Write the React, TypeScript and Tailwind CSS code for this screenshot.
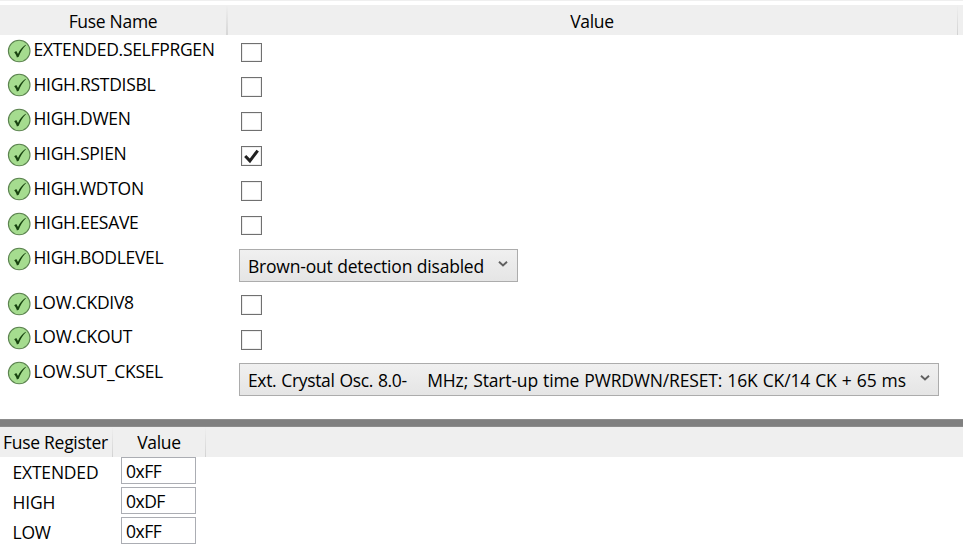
import React from "react";

type Fuse = { name: string; pad: string; textPad: string; height: string; short?: boolean; checked?: boolean; option?: string };

const fuses: Fuse[] = [
  { name: "EXTENDED.SELFPRGEN", pad: "pt-2", textPad: "pt-[2px]", height: "h-[34px]", short: true },
  { name: "HIGH.RSTDISBL", pad: "pt-2", textPad: "pt-[3px]", height: "h-[35px]" },
  { name: "HIGH.DWEN", pad: "pt-2", textPad: "pt-[2px]", height: "h-[35px]", short: true },
  { name: "HIGH.SPIEN", pad: "pt-[7px]", textPad: "pt-[2px]", height: "h-[34px]", checked: true },
  { name: "HIGH.WDTON", pad: "pt-2", textPad: "pt-[3px]", height: "h-[35px]" },
  { name: "HIGH.EESAVE", pad: "pt-2", textPad: "pt-[2px]", height: "h-[35px]", short: true },
  { name: "HIGH.BODLEVEL", pad: "pt-2", textPad: "pt-[2px]", height: "h-[45px]", option: "brownout" },
  { name: "LOW.CKDIV8", pad: "pt-[7px]", textPad: "pt-[2px]", height: "h-[34px]" },
  { name: "LOW.CKOUT", pad: "pt-2", textPad: "pt-[2px]", height: "h-[35px]" },
  { name: "LOW.SUT_CKSEL", pad: "pt-2", textPad: "pt-[2px]", height: "h-[62px]", option: "clock" },
];

const registers = [
  { name: "EXTENDED", value: "0xFF" },
  { name: "HIGH", value: "0xDF" },
  { name: "LOW", value: "0xFF" },
];

function StatusIcon() {
  return (
    <svg className="mt-[4px] h-[24px] w-[24px] shrink-0" viewBox="0 0 24 24">
      <circle cx="12.2" cy="12" r="10.8" fill="#a5dc8f" stroke="#5c8350" strokeWidth="1.1" />
      <path d="M7.2 13.2 9.3 12 11 15.1C12.6 11.3 14.9 8.2 18.6 5.8L18.9 6.2C15.6 9.2 13.4 13.2 11.7 17.8L9.9 18.5C9.5 16.5 8.5 14.6 7.2 13.2Z" fill="#184310" />
    </svg>
  );
}

function Check({ checked, short }: { checked?: boolean; short?: boolean }) {
  return (
    <span className={`block w-[21px] border border-[#707070] bg-white shadow-[inset_0_0_0_1px_#eeeeee] ${short ? "h-[19px]" : "h-5"}`}>
      {checked && (
        <svg className="h-[18px] w-[19px]" viewBox="0 0 19 18" fill="none">
          <path d="m3.2 9 4.7 4.9L15.7 3.6" stroke="#212121" strokeWidth="3" />
        </svg>
      )}
    </span>
  );
}

function Dropdown({ wide, children }: { wide?: boolean; children: React.ReactNode }) {
  return (
    <div className={`flex h-[33px] items-center border border-[#acacac] bg-linear-to-b from-[#f0f0f0] to-[#e5e5e5] pl-2 ${wide ? "w-[700px] tracking-[-0.16px] [word-spacing:0.75px]" : "w-[279px] tracking-[-0.21px] [word-spacing:0.3px]"}`}>
      <span className="flex-1 pt-px whitespace-pre">{children}</span>
      <svg className={`mb-1 h-[8px] w-[10px] shrink-0 ${wide ? "mr-2" : "mr-[9px]"}`} viewBox="0 0 10 8" fill="none">
        <path d="m1 1.8 4 3.7 4-3.7" stroke="#606060" strokeWidth="1.9" />
      </svg>
    </div>
  );
}

function Divider() {
  return <span className="h-full w-px shrink-0 bg-linear-to-b from-[#efefef] to-[#d2d2d2]" />;
}

export default function App() {
  return (
    <main className="h-[558px] w-[963px] overflow-hidden bg-white font-['Open_Sans','Noto_Sans',sans-serif] text-[17.5px] leading-6 font-normal text-black">
      <div className="h-px bg-[#efefef]" />
      <header className="mt-1 flex h-[30px] items-center bg-[#efefef]">
        <div className="w-[226px] pt-px text-center tracking-[-0.3px]">Fuse Name</div>
        <span className="h-full w-[2px] shrink-0 bg-linear-to-b from-[#efefef] to-[#d6d6d6]" />
        <div className="w-[729px] pt-px pr-px text-center tracking-[-0.3px]">Value</div>
        <Divider />
      </header>
      <section className="h-[384px]">
        {fuses.map((f) => (
          <div key={f.name} className={`flex items-start ${f.height}`}>
            <div className="flex w-[239px] pl-[7px]">
              <StatusIcon />
              <span className={`ml-[2.5px] tracking-[-0.3px] whitespace-nowrap ${f.textPad}`}>{f.name}</span>
            </div>
            {f.option === "brownout" && (
              <div className="pt-[6px]"><Dropdown>Brown-out detection disabled</Dropdown></div>
            )}
            {f.option === "clock" && (
              <div className="pt-[6px]">
                <Dropdown wide>
                  <span className="tracking-[-0.35px]">Ext. Crystal Osc. 8.0-</span>
                  {"    MHz; Start-up time PWRDWN/RESET: 16K CK/14 CK + 65 ms"}
                </Dropdown>
              </div>
            )}
            {!f.option && <div className={`pl-[2px] ${f.pad}`}><Check checked={f.checked} short={f.short} /></div>}
          </div>
        ))}
      </section>
      <div className="h-2 border-y border-[#8c8c8c] bg-[#808080]" />
      <header className="flex h-[30px] items-center bg-[#efefef]">
        <div className="w-[112px] pl-[3px] whitespace-nowrap tracking-[-0.28px]">Fuse Register</div>
        <Divider />
        <div className="w-[92px] text-center tracking-[-0.3px]">Value</div>
        <Divider />
      </header>
      <section>
        {registers.map((r) => (
          <div key={r.name} className="flex h-[30px] items-start">
            <span className="w-[121px] pt-[3px] pl-[12.5px] tracking-[-0.2px]">{r.name}</span>
            <span className="h-[27px] w-[75px] border border-[#abadb3] pt-px pl-1 tracking-[-0.5px]">{r.value}</span>
          </div>
        ))}
      </section>
    </main>
  );
}
